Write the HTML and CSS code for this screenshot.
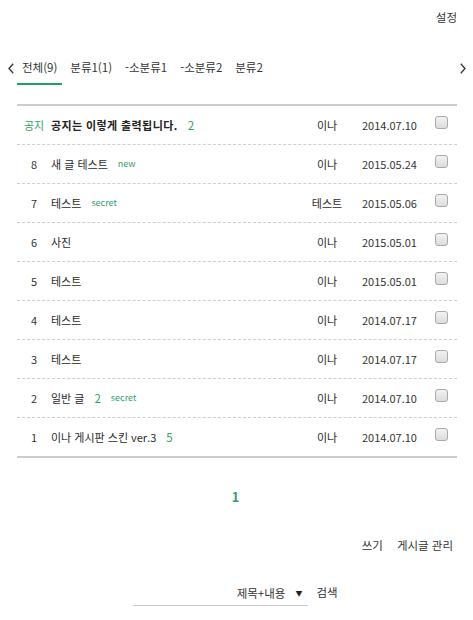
FILE: index.html
```html
<!DOCTYPE html>
<html lang="ko">
<head>
<meta charset="utf-8">
<link rel="stylesheet" href="styles.css">
</head>
<body>
<div class="page">
  <div class="top"><a class="setting">설정</a></div>

  <nav class="cats">
    <span class="arrow"><svg width="6" height="11" viewBox="0 0 6 11"><path d="M5.2 0.8 L1 5.5 L5.2 10.2" fill="none" stroke="#333" stroke-width="1.3"/></svg></span>
    <ul class="tabs">
      <li class="tab on">전체(9)</li>
      <li class="tab">분류1(1)</li>
      <li class="tab">-소분류1</li>
      <li class="tab">-소분류2</li>
      <li class="tab">분류2</li>
    </ul>
    <span class="arrow"><svg width="6" height="11" viewBox="0 0 6 11"><path d="M0.8 0.8 L5 5.5 L0.8 10.2" fill="none" stroke="#333" stroke-width="1.3"/></svg></span>
  </nav>

  <div class="list">
    <div class="row notice">
      <span class="num green">공지</span>
      <span class="title"><b>공지는 이렇게 출력됩니다.</b><span class="cmt">2</span></span>
      <span class="author">이나</span>
      <span class="date">2014.07.10</span>
      <span class="chk"><i class="box"></i></span>
    </div>
    <div class="row">
      <span class="num">8</span>
      <span class="title">새 글 테스트<span class="tag">new</span></span>
      <span class="author">이나</span>
      <span class="date">2015.05.24</span>
      <span class="chk"><i class="box"></i></span>
    </div>
    <div class="row">
      <span class="num">7</span>
      <span class="title">테스트<span class="tag">secret</span></span>
      <span class="author">테스트</span>
      <span class="date">2015.05.06</span>
      <span class="chk"><i class="box"></i></span>
    </div>
    <div class="row">
      <span class="num">6</span>
      <span class="title">사진</span>
      <span class="author">이나</span>
      <span class="date">2015.05.01</span>
      <span class="chk"><i class="box"></i></span>
    </div>
    <div class="row">
      <span class="num">5</span>
      <span class="title">테스트</span>
      <span class="author">이나</span>
      <span class="date">2015.05.01</span>
      <span class="chk"><i class="box"></i></span>
    </div>
    <div class="row">
      <span class="num">4</span>
      <span class="title">테스트</span>
      <span class="author">이나</span>
      <span class="date">2014.07.17</span>
      <span class="chk"><i class="box"></i></span>
    </div>
    <div class="row">
      <span class="num">3</span>
      <span class="title">테스트</span>
      <span class="author">이나</span>
      <span class="date">2014.07.17</span>
      <span class="chk"><i class="box"></i></span>
    </div>
    <div class="row">
      <span class="num">2</span>
      <span class="title">일반 글<span class="cmt">2</span><span class="tag">secret</span></span>
      <span class="author">이나</span>
      <span class="date">2014.07.10</span>
      <span class="chk"><i class="box"></i></span>
    </div>
    <div class="row">
      <span class="num">1</span>
      <span class="title">이나 게시판 스킨 ver.3<span class="cmt">5</span></span>
      <span class="author">이나</span>
      <span class="date">2014.07.10</span>
      <span class="chk"><i class="box"></i></span>
    </div>
  </div>

  <div class="paging"><a class="cur">1</a></div>

  <div class="actions"><a>쓰기</a><a>게시글 관리</a></div>

  <div class="search">
    <div class="select"><span>제목+내용</span><span class="caret">▼</span></div>
    <a class="go">검색</a>
  </div>
</div>
</body>
</html>
```

FILE: styles.css
```css
* { box-sizing: border-box; }
html, body { margin: 0; padding: 0; background: #fff; }
body {
  font-family: "Noto Sans CJK KR", "Noto Sans", sans-serif;
  color: #333;
  font-size: 11px;
}
a { color: inherit; text-decoration: none; }

.top {
  height: 34px;
  display: flex;
  justify-content: flex-end;
  align-items: center;
  padding-right: 16px;
  font-size: 11.5px;
}

.cats {
  margin-top: 18px;
  display: flex;
  align-items: flex-start;
  padding: 0 7px 0 8px;
}
.arrow {
  display: flex;
  align-items: center;
  height: 30px;
  padding-top: 3px;
}
.tabs {
  list-style: none;
  margin: 0 0 0 3px;
  padding: 0;
  display: flex;
  gap: 3px;
  flex: 1;
}
.tab {
  font-size: 11.5px;
  padding: 3px 5px 4px;
  line-height: 24px;
  border-bottom: 2px solid transparent;
  color: #333;
}
.tab.on { border-bottom-color: #1fa35c; }

.list {
  margin: 19px 16px 0 17px;
  border-top: 2px solid #cccccc;
  border-bottom: 2px solid #cccccc;
}
.row {
  display: grid;
  grid-template-columns: 34px 1fr 58px 67px 34px;
  align-items: center;
  height: 39px;
  border-bottom: 1px dashed #cfcfcf;
}
.row:last-child { border-bottom: none; height: 38px; }
.row > span { line-height: 38px; }
.num { text-align: center; color: #333; }
.green { color: #2f9e6a; }
.title { display: flex; align-items: center; white-space: nowrap; color: #2a2a2a; }
.notice .title b { font-weight: 700; letter-spacing: 0.4px; color: #222; }
.cmt { color: #2f9e6a; margin-left: 10px; font-size: 11.5px; }
.tag { color: #2f9e6a; font-size: 9px; margin-left: 10px; }
.author { text-align: center; color: #2a2a2a; }
.date { text-align: center; color: #333; }
.chk { display: flex; align-items: center; padding-left: 12px; }
.box {
  display: block;
  width: 13px;
  height: 13px;
  margin-top: -6px;
  border: 1px solid #a9a9a9;
  border-radius: 3px;
  background: linear-gradient(#f2f2f2, #dcdcdc);
}

.paging {
  margin-top: 29px;
  text-align: center;
  line-height: 20px;
}
.paging .cur { color: #2f9e6a; font-weight: 700; font-size: 12.5px; margin-left: -2px; }

.actions {
  margin-top: 28px;
  display: flex;
  justify-content: flex-end;
  gap: 14px;
  padding-right: 20px;
  line-height: 20px;
  font-size: 11.5px;
}

.search {
  margin-top: 25px;
  display: flex;
  justify-content: center;
  align-items: flex-start;
  gap: 8px;
  font-size: 11.5px;
  padding-right: 2px;
}
.select {
  width: 175px;
  height: 26px;
  border-bottom: 1px solid #cccccc;
  display: flex;
  justify-content: flex-end;
  align-items: center;
  padding-right: 6px;
  line-height: 24px;
}
.caret { font-size: 7px; margin-left: 10px; color: #222; }
.go { line-height: 24px; }
```
